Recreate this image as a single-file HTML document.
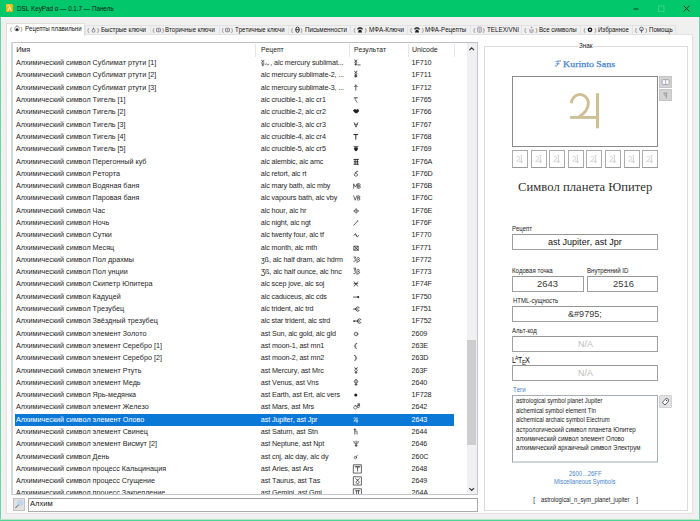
<!DOCTYPE html>
<html lang="ru"><head><meta charset="utf-8"><title>DSL KeyPad</title>
<style>
*{box-sizing:border-box;margin:0;padding:0}
html,body{width:700px;height:521px;overflow:hidden;background:#f0f0f0}
body{position:relative;font-family:"Liberation Sans",sans-serif;color:#000;font-kerning:none}
.abs{position:absolute}
.t{position:absolute;white-space:pre;transform-origin:0 0;display:block}
#win{position:absolute;left:0;top:0;width:700px;height:521px;background:#f0f0f0;border-left:1px solid #62d8a0;border-right:1px solid #62d8a0;border-bottom:1px solid #4fd495}
#winb{position:absolute;left:0;top:519px;width:700px;height:1px;background:#b4e6cd;z-index:2}
#inner{position:absolute;left:1px;top:17px;width:698px;height:502.400px;border:1.200px solid #f9eff7;border-bottom-width:0;background:#f0f0f0}
#title{position:absolute;left:0;top:0;width:700px;height:17px;background:#03c86b}
#ticon{position:absolute;left:6px;top:4.200px;width:7px;height:8.200px;border-radius:1.300px;background:linear-gradient(160deg,#f3c524,#e2a800);overflow:hidden}
.tab{position:absolute;top:25px;height:10px;background:#f0f0f0;border:1px solid #e2e2e2;border-bottom:none}
.tab.sel{top:23px;height:12.500px;background:#fff;border-color:#dedede;z-index:3}
#pane{position:absolute;left:6px;top:34px;width:687px;height:480px;background:#fff;border:1px solid #e2e2e2}
#lb{position:absolute;left:11px;top:42px;width:467px;height:453px;overflow:hidden;background:#fff}
.lbl{position:absolute;z-index:6}
#lbin{position:absolute;left:-11px;top:-42px;width:700px;height:521px}
.hsep{position:absolute;top:43.500px;height:13.500px;width:1px;background:#e5e5e5}
svg.sy{display:block;fill:none;stroke:currentColor;stroke-width:.9;stroke-linecap:round;stroke-linejoin:round;overflow:visible}
#sbtrack{position:absolute;left:467px;top:43px;width:10px;height:451px;background:#f0f0f0}
#sbthumb{position:absolute;left:467px;top:340px;width:8.500px;height:105px;background:#cdcdcd}
.field{position:absolute;background:#fff;border:1px solid #a0a0a0;border-top-color:#969696;border-radius:.800px}
.sbox{position:absolute;top:150px;width:16px;height:18px;background:#fff;border:1px solid #ababab;border-bottom-color:#9a9a9a;display:flex;align-items:center;justify-content:center}
.gbtn{position:absolute;background:#d3d3d3;border:1px solid #c6c6c6}
</style></head><body>
<div id="win"></div><div id="winb"></div>
<div id="inner"></div>
<div id="title">
  <div id="ticon"><svg viewBox="0 0 7 8.200" width="7" height="8.200" style="display:block"><path d="M2.100 1.500c.800-.200 1.200.200 1.500 1l1.700 4.400M3.500 3.700l-1.800 3.200" fill="none" stroke="#fff7dc" stroke-width=".95" stroke-linecap="round"/></svg></div>
  <span class="t" style="left:16.70px;top:5.00px;font-size:7.5px;line-height:7.5px;color:#0a2114;transform:scaleX(0.8378);">DSL KeyPad α — 0.1.7 — Панель</span>
  <svg class="abs" style="left:630px;top:0" width="70" height="17" viewBox="0 0 70 17"><path d="M3.500 9h5" stroke="#0a3a20" stroke-width="1"/><rect x="28.500" y="6" width="5.500" height="5.500" fill="none" stroke="#3ad285" stroke-width="1"/><path d="M53.700 5.700l5.800 5.800M59.500 5.700l-5.800 5.800" stroke="#0a3a20" stroke-width="1"/></svg>
</div>
<div class="tab sel" style="left:6.4px;width:79.0px"></div>
<span class="t" style="left:10.00px;top:27.00px;font-size:5.8px;line-height:5.8px;color:#505058;z-index:5;">(</span>
<span class="t" style="left:20.55px;top:27.00px;font-size:5.8px;line-height:5.8px;color:#505058;z-index:5;">)</span>
<span class="abs" style="left:13.8px;top:25.2px;width:6px;height:7px;z-index:5;display:flex;align-items:center;justify-content:center"><svg viewBox="0 0 6 7" width="6" height="7"><circle cx="3" cy="3.600" r="2.350" fill="#fff" stroke="#7d7d86" stroke-width=".8"/><path d="M1.300 5.100l1.700-2.400l1.700 2.400c-1 .900-2.400.900-3.400 0z" fill="#15151c"/><path d="M3 .300v1" stroke="#7d7d86" stroke-width=".8"/></svg></span>
<span class="t" style="left:24.75px;top:26.00px;font-size:6.6px;line-height:6.6px;color:#111;transform:scaleX(0.9187);z-index:5;">Рецепты плавильни</span>
<div class="tab" style="left:85.4px;width:65.2px"></div>
<span class="t" style="left:87.20px;top:28.00px;font-size:5.8px;line-height:5.8px;color:#505058;z-index:5;">(</span>
<span class="t" style="left:97.05px;top:28.00px;font-size:5.8px;line-height:5.8px;color:#505058;z-index:5;">)</span>
<span class="abs" style="left:90.2px;top:26.2px;width:6px;height:7px;z-index:5;display:flex;align-items:center;justify-content:center"><svg viewBox="0 0 5 7" width="5" height="7"><circle cx="2.500" cy="4.700" r="1.500" fill="none" stroke="#70707a" stroke-width=".8"/><path d="M2.500 1.600v1.600M1.700 2.300h1.600" stroke="#70707a" stroke-width=".7"/></svg></span>
<span class="t" style="left:101.15px;top:27.00px;font-size:6.6px;line-height:6.6px;color:#111;transform:scaleX(0.9370);z-index:5;">Быстрые ключи</span>
<div class="tab" style="left:149.6px;width:70.0px"></div>
<span class="t" style="left:152.50px;top:28.00px;font-size:5.8px;line-height:5.8px;color:#505058;z-index:5;">(</span>
<span class="t" style="left:162.05px;top:28.00px;font-size:5.8px;line-height:5.8px;color:#505058;z-index:5;">)</span>
<span class="abs" style="left:155.6px;top:26.2px;width:6px;height:7px;z-index:5;display:flex;align-items:center;justify-content:center"><svg viewBox="0 0 5 7" width="5" height="7"><rect x=".500" y="2.300" width="4" height="3.400" rx=".600" fill="none" stroke="#70707a" stroke-width=".8"/><rect x="1.800" y="3.400" width="1.500" height="1.200" fill="#70707a"/></svg></span>
<span class="t" style="left:165.35px;top:27.00px;font-size:6.6px;line-height:6.6px;color:#111;transform:scaleX(0.9139);z-index:5;">Вторичные ключи</span>
<div class="tab" style="left:218.6px;width:70.3px"></div>
<span class="t" style="left:221.80px;top:28.00px;font-size:5.8px;line-height:5.8px;color:#505058;z-index:5;">(</span>
<span class="t" style="left:231.05px;top:28.00px;font-size:5.8px;line-height:5.8px;color:#505058;z-index:5;">)</span>
<span class="abs" style="left:224.8px;top:26.2px;width:6px;height:7px;z-index:5;display:flex;align-items:center;justify-content:center"><svg viewBox="0 0 5 7" width="5" height="7"><rect x=".500" y="2.300" width="4" height="3.400" rx=".600" fill="none" stroke="#70707a" stroke-width=".8"/><rect x="1.800" y="3.400" width="1.500" height="1.200" fill="#70707a"/></svg></span>
<span class="t" style="left:234.95px;top:27.00px;font-size:6.6px;line-height:6.6px;color:#111;transform:scaleX(0.9147);z-index:5;">Третичные ключи</span>
<div class="tab" style="left:287.9px;width:63.4px"></div>
<span class="t" style="left:291.00px;top:28.00px;font-size:5.8px;line-height:5.8px;color:#505058;z-index:5;">(</span>
<span class="t" style="left:300.55px;top:28.00px;font-size:5.8px;line-height:5.8px;color:#505058;z-index:5;">)</span>
<span class="abs" style="left:294.1px;top:26.2px;width:6px;height:7px;z-index:5;display:flex;align-items:center;justify-content:center"><svg viewBox="0 0 5 7" width="5" height="7"><ellipse cx="2.500" cy="3.700" rx="1.750" ry="2.700" fill="none" stroke="#25252c" stroke-width=".95"/><path d="M.800 3.700h3.400" stroke="#25252c" stroke-width=".9"/></svg></span>
<span class="t" style="left:305.15px;top:27.00px;font-size:6.6px;line-height:6.6px;color:#111;transform:scaleX(0.9471);z-index:5;">Письменности</span>
<div class="tab" style="left:350.3px;width:57.8px"></div>
<span class="t" style="left:353.50px;top:28.00px;font-size:5.8px;line-height:5.8px;color:#505058;z-index:5;">(</span>
<span class="t" style="left:364.85px;top:28.00px;font-size:5.8px;line-height:5.8px;color:#505058;z-index:5;">)</span>
<span class="abs" style="left:357.0px;top:26.2px;width:6px;height:7px;z-index:5;display:flex;align-items:center;justify-content:center"><svg viewBox="0 0 6 7" width="6" height="7"><path d="M.300 2.800c0-2.100 5.400-2.100 5.400 0v.600h-1.400v-.700h-2.600v.700h-1.400zM.900 6.500l1-2.700h2.200l1 2.700z" fill="#1c1c22"/></svg></span>
<span class="t" style="left:368.75px;top:27.00px;font-size:6.6px;line-height:6.6px;color:#111;transform:scaleX(0.9516);z-index:5;">МФА-Ключи</span>
<div class="tab" style="left:407.1px;width:63.9px"></div>
<span class="t" style="left:410.00px;top:28.00px;font-size:5.8px;line-height:5.8px;color:#505058;z-index:5;">(</span>
<span class="t" style="left:421.75px;top:28.00px;font-size:5.8px;line-height:5.8px;color:#505058;z-index:5;">)</span>
<span class="abs" style="left:413.9px;top:26.2px;width:6px;height:7px;z-index:5;display:flex;align-items:center;justify-content:center"><svg viewBox="0 0 6 7" width="6" height="7"><path d="M.300 2.800c0-2.100 5.400-2.100 5.400 0v.600h-1.400v-.700h-2.600v.700h-1.400zM.900 6.500l1-2.700h2.200l1 2.700z" fill="#1c1c22"/></svg></span>
<span class="t" style="left:425.45px;top:27.00px;font-size:6.6px;line-height:6.6px;color:#111;transform:scaleX(0.9368);z-index:5;">МФА-Рецепты</span>
<div class="tab" style="left:470.0px;width:52.1px"></div>
<span class="t" style="left:473.20px;top:28.00px;font-size:5.8px;line-height:5.8px;color:#505058;z-index:5;">(</span>
<span class="t" style="left:482.75px;top:28.00px;font-size:5.8px;line-height:5.8px;color:#505058;z-index:5;">)</span>
<span class="abs" style="left:476.1px;top:26.2px;width:6px;height:7px;z-index:5;display:flex;align-items:center;justify-content:center"><svg viewBox="0 0 5 7" width="5" height="7"><rect x=".700" y="1.200" width="3.600" height="5" rx=".600" fill="none" stroke="#80808a" stroke-width=".75"/><path d="M1.600 2.800h1.800M1.600 4h1.800M2 5.200h1" stroke="#80808a" stroke-width=".6"/></svg></span>
<span class="t" style="left:486.65px;top:27.00px;font-size:6.6px;line-height:6.6px;color:#111;transform:scaleX(0.9483);z-index:5;">TELEX/VNI</span>
<div class="tab" style="left:521.1px;width:60.2px"></div>
<span class="t" style="left:524.30px;top:28.00px;font-size:5.8px;line-height:5.8px;color:#505058;z-index:5;">(</span>
<span class="t" style="left:535.55px;top:28.00px;font-size:5.8px;line-height:5.8px;color:#505058;z-index:5;">)</span>
<span class="abs" style="left:528.6px;top:26.2px;width:6px;height:7px;z-index:5;display:flex;align-items:center;justify-content:center"><svg viewBox="0 0 5 7" width="5" height="7"><path d="M2.500 .800v1.600M1.800 1.500h1.400M.900 6.200h3.200M1.200 6.200l-.500-2.800l1.800 1.300l1.800-1.300l-.500 2.800" fill="none" stroke="#85858f" stroke-width=".7"/></svg></span>
<span class="t" style="left:539.45px;top:27.00px;font-size:6.6px;line-height:6.6px;color:#111;transform:scaleX(0.9308);z-index:5;">Все символы</span>
<div class="tab" style="left:580.3px;width:52.8px"></div>
<span class="t" style="left:583.50px;top:28.00px;font-size:5.8px;line-height:5.8px;color:#505058;z-index:5;">(</span>
<span class="t" style="left:594.45px;top:28.00px;font-size:5.8px;line-height:5.8px;color:#505058;z-index:5;">)</span>
<span class="abs" style="left:587.2px;top:26.2px;width:6px;height:7px;z-index:5;display:flex;align-items:center;justify-content:center"><svg viewBox="0 0 6 7" width="6" height="7"><circle cx="3" cy="3.800" r="2.350" fill="#17171c"/><circle cx="3" cy="3.800" r=".950" fill="#fff"/></svg></span>
<span class="t" style="left:598.05px;top:27.00px;font-size:6.6px;line-height:6.6px;color:#111;transform:scaleX(0.9188);z-index:5;">Избранное</span>
<div class="tab" style="left:632.1px;width:44.3px"></div>
<span class="t" style="left:634.90px;top:28.00px;font-size:5.8px;line-height:5.8px;color:#505058;z-index:5;">(</span>
<span class="t" style="left:645.15px;top:28.00px;font-size:5.8px;line-height:5.8px;color:#505058;z-index:5;">)</span>
<span class="abs" style="left:638.5px;top:26.2px;width:6px;height:7px;z-index:5;display:flex;align-items:center;justify-content:center"><svg viewBox="0 0 5 7" width="5" height="7"><circle cx="2.500" cy="3" r="1.850" fill="none" stroke="#4c4c55" stroke-width=".8"/><path d="M1.800 5.500h1.400M2 6.400h1M2.500 3.200v1.800" stroke="#4c4c55" stroke-width=".7"/></svg></span>
<span class="t" style="left:649.05px;top:27.00px;font-size:6.6px;line-height:6.6px;color:#111;transform:scaleX(0.9337);z-index:5;">Помощь</span>
<div id="pane"></div>
<div id="lb"><div id="lbin">
  <span class="t" style="left:16.20px;top:46.00px;font-size:7.2px;line-height:7.2px;color:#222;">Имя</span>
  <span class="t" style="left:260.80px;top:46.00px;font-size:7.2px;line-height:7.2px;color:#222;transform:scaleX(0.9407);">Рецепт</span>
  <span class="t" style="left:353.60px;top:46.00px;font-size:7.2px;line-height:7.2px;color:#222;transform:scaleX(0.9370);">Результат</span>
  <span class="t" style="left:411.50px;top:46.00px;font-size:7.2px;line-height:7.2px;color:#222;transform:scaleX(0.9767);">Unicode</span>
  <div class="hsep" style="left:255.400px"></div><div class="hsep" style="left:349px"></div><div class="hsep" style="left:407.800px"></div><div class="hsep" style="left:454.200px"></div>
<span class="t" style="left:16.00px;top:59.00px;font-size:7.2px;line-height:7.2px;color:#1e1e1e;">Алхимический символ Сублимат ртути [1]</span>
<svg class="abs" style="left:261px;top:58.5px" viewBox="0 0 10 8" width="10" height="8"><g fill="none" stroke="#333" stroke-width=".7" stroke-linecap="round"><path d="M.600 1.200c0 1.600 2.400 1.600 2.400 0M1.800 2.600a1.200 1.200 0 1 0 .010 0M1.800 5v1.800M1 6h1.600"/><path d="M4.200 5.600c.400-1.300 1.400-1.300 1.800-.300s1.300 1.200 1.900-.200" stroke-width=".65"/></g></svg>
<span class="t" style="left:270.30px;top:59.00px;font-size:7.2px;line-height:7.2px;color:#1e1e1e;letter-spacing:-0.11px;">, alc mercury sublimat...</span>
<span class="abs" style="left:353.400px;top:58.4px;color:#1e1e1e"><svg class="sy" viewBox="0 0 10 10" width="8.0" height="8"><path d="M2 2.5c0 2 3 2 3 0M3.5 4a1.3 1.3 0 1 0 .01 0M3.5 6.6v2.4M2.3 8h2.4M6 8.6h3"/></svg></span>
<span class="t" style="left:411.60px;top:59.00px;font-size:7.2px;line-height:7.2px;color:#1e1e1e;letter-spacing:-0.1px;">1F710</span>
<span class="t" style="left:16.00px;top:71.00px;font-size:7.2px;line-height:7.2px;color:#1e1e1e;">Алхимический символ Сублимат ртути [2]</span>
<span class="t" style="left:260.80px;top:71.00px;font-size:7.2px;line-height:7.2px;color:#1e1e1e;letter-spacing:-0.11px;">alc mercury sublimate-2, ...</span>
<span class="abs" style="left:353.400px;top:70.4px;color:#1e1e1e"><svg class="sy" viewBox="0 0 10 10" width="8.0" height="8"><path d="M2 1.5c0 2 3 2 3 0M3.5 3.2a1.3 1.3 0 1 0 .01 0M3.5 5.8v3.2M2.3 7h2.4M2.3 8.2h2.4"/></svg></span>
<span class="t" style="left:411.60px;top:71.00px;font-size:7.2px;line-height:7.2px;color:#1e1e1e;letter-spacing:-0.1px;">1F711</span>
<span class="t" style="left:16.00px;top:84.00px;font-size:7.2px;line-height:7.2px;color:#1e1e1e;">Алхимический символ Сублимат ртути [3]</span>
<span class="t" style="left:260.80px;top:84.00px;font-size:7.2px;line-height:7.2px;color:#1e1e1e;letter-spacing:-0.11px;">alc mercury sublimate-3, ...</span>
<span class="abs" style="left:353.400px;top:83.4px;color:#1e1e1e"><svg class="sy" viewBox="0 0 10 10" width="8.0" height="8"><path d="M1.5 4.5c1-1.5 3-1.5 4 0M3.5 3.4v5.6M3.5 2.2v.4"/></svg></span>
<span class="t" style="left:411.60px;top:84.00px;font-size:7.2px;line-height:7.2px;color:#1e1e1e;letter-spacing:-0.1px;">1F712</span>
<span class="t" style="left:16.00px;top:96.00px;font-size:7.2px;line-height:7.2px;color:#1e1e1e;">Алхимический символ Тигель [1]</span>
<span class="t" style="left:260.80px;top:96.00px;font-size:7.2px;line-height:7.2px;color:#1e1e1e;letter-spacing:-0.11px;">alc crucible-1, alc cr1</span>
<span class="abs" style="left:353.400px;top:95.4px;color:#1e1e1e"><svg class="sy" viewBox="0 0 10 10" width="8.0" height="8"><path d="M1.5 3.5h4M3.5 3.5c-2 2 0 3 1.5 5.5"/></svg></span>
<span class="t" style="left:411.60px;top:96.00px;font-size:7.2px;line-height:7.2px;color:#1e1e1e;letter-spacing:-0.1px;">1F765</span>
<span class="t" style="left:16.00px;top:108.00px;font-size:7.2px;line-height:7.2px;color:#1e1e1e;">Алхимический символ Тигель [2]</span>
<span class="t" style="left:260.80px;top:108.00px;font-size:7.2px;line-height:7.2px;color:#1e1e1e;letter-spacing:-0.11px;">alc crucible-2, alc cr2</span>
<span class="abs" style="left:353.400px;top:107.4px;color:#1e1e1e"><svg class="sy" viewBox="0 0 10 10" width="8.0" height="8"><path d="M1 4.5c0 4 6 4 6 0c0-2-2.5-2-3 0c-.5-2-3-2-3 0z" fill="currentColor"/></svg></span>
<span class="t" style="left:411.60px;top:108.00px;font-size:7.2px;line-height:7.2px;color:#1e1e1e;letter-spacing:-0.1px;">1F766</span>
<span class="t" style="left:16.00px;top:121.00px;font-size:7.2px;line-height:7.2px;color:#1e1e1e;">Алхимический символ Тигель [3]</span>
<span class="t" style="left:260.80px;top:121.00px;font-size:7.2px;line-height:7.2px;color:#1e1e1e;letter-spacing:-0.11px;">alc crucible-3, alc cr3</span>
<span class="abs" style="left:353.400px;top:120.4px;color:#1e1e1e"><svg class="sy" viewBox="0 0 10 10" width="8.0" height="8"><path d="M1.5 3.5l2.3 5.5l2.3-5.5M2.3 5.3h3"/></svg></span>
<span class="t" style="left:411.60px;top:121.00px;font-size:7.2px;line-height:7.2px;color:#1e1e1e;letter-spacing:-0.1px;">1F767</span>
<span class="t" style="left:16.00px;top:133.00px;font-size:7.2px;line-height:7.2px;color:#1e1e1e;">Алхимический символ Тигель [4]</span>
<span class="t" style="left:260.80px;top:133.00px;font-size:7.2px;line-height:7.2px;color:#1e1e1e;letter-spacing:-0.11px;">alc crucible-4, alc cr4</span>
<span class="abs" style="left:353.400px;top:132.4px;color:#1e1e1e"><svg class="sy" viewBox="0 0 10 10" width="8.0" height="8"><path d="M1 3.2h5M3.5 3.2v5.8" stroke-width="1.2"/></svg></span>
<span class="t" style="left:411.60px;top:133.00px;font-size:7.2px;line-height:7.2px;color:#1e1e1e;letter-spacing:-0.1px;">1F768</span>
<span class="t" style="left:16.00px;top:145.00px;font-size:7.2px;line-height:7.2px;color:#1e1e1e;">Алхимический символ Тигель [5]</span>
<span class="t" style="left:260.80px;top:145.00px;font-size:7.2px;line-height:7.2px;color:#1e1e1e;letter-spacing:-0.11px;">alc crucible-5, alc cr5</span>
<span class="abs" style="left:353.400px;top:144.4px;color:#1e1e1e"><svg class="sy" viewBox="0 0 10 10" width="8.0" height="8"><path d="M1.2 3h5M3.7 3v2M1.7 5c0 5 4 5 4 0z" fill="currentColor" stroke-width=".8"/></svg></span>
<span class="t" style="left:411.60px;top:145.00px;font-size:7.2px;line-height:7.2px;color:#1e1e1e;letter-spacing:-0.1px;">1F769</span>
<span class="t" style="left:16.00px;top:158.00px;font-size:7.2px;line-height:7.2px;color:#1e1e1e;">Алхимический символ Перегонный куб</span>
<span class="t" style="left:260.80px;top:158.00px;font-size:7.2px;line-height:7.2px;color:#1e1e1e;letter-spacing:-0.11px;">alc alembic, alc amc</span>
<span class="abs" style="left:353.400px;top:157.4px;color:#1e1e1e"><svg class="sy" viewBox="0 0 10 10" width="8.0" height="8"><path d="M1.2 3h5.6M1.2 9h5.6M2.6 3v6M5.4 3v6M1.5 6h5" stroke-width="1.1"/></svg></span>
<span class="t" style="left:411.60px;top:158.00px;font-size:7.2px;line-height:7.2px;color:#1e1e1e;letter-spacing:-0.1px;">1F76A</span>
<span class="t" style="left:16.00px;top:170.00px;font-size:7.2px;line-height:7.2px;color:#1e1e1e;">Алхимический символ Реторта</span>
<span class="t" style="left:260.80px;top:170.00px;font-size:7.2px;line-height:7.2px;color:#1e1e1e;letter-spacing:-0.11px;">alc retort, alc rt</span>
<span class="abs" style="left:353.400px;top:169.4px;color:#1e1e1e"><svg class="sy" viewBox="0 0 10 10" width="8.0" height="8"><path d="M3.6 5a2 2 0 1 0 .01 0M3 5c0-2 2-2.5 3-2"/></svg></span>
<span class="t" style="left:411.60px;top:170.00px;font-size:7.2px;line-height:7.2px;color:#1e1e1e;letter-spacing:-0.1px;">1F76D</span>
<span class="t" style="left:16.00px;top:182.00px;font-size:7.2px;line-height:7.2px;color:#1e1e1e;">Алхимический символ Водяная баня</span>
<span class="t" style="left:260.80px;top:182.00px;font-size:7.2px;line-height:7.2px;color:#1e1e1e;letter-spacing:-0.11px;">alc mary bath, alc mby</span>
<span class="abs" style="left:353.400px;top:181.4px;color:#1e1e1e"><svg class="sy" viewBox="0 0 11 10" width="8.8" height="8"><path d="M.8 9v-5.5l2.2 4l2.2-4v5.5M6.3 3.5v5.5h1.7c1.6 0 1.6-2.7 0-2.7h-1.7M8 6.3c1.3 0 1.3-2.8 0-2.8h-1.7" stroke-width=".8"/></svg></span>
<span class="t" style="left:411.60px;top:182.00px;font-size:7.2px;line-height:7.2px;color:#1e1e1e;letter-spacing:-0.1px;">1F76B</span>
<span class="t" style="left:16.00px;top:194.00px;font-size:7.2px;line-height:7.2px;color:#1e1e1e;">Алхимический символ Паровая баня</span>
<span class="t" style="left:260.80px;top:194.00px;font-size:7.2px;line-height:7.2px;color:#1e1e1e;letter-spacing:-0.11px;">alc vapours bath, alc vby</span>
<span class="abs" style="left:353.400px;top:193.4px;color:#1e1e1e"><svg class="sy" viewBox="0 0 11 10" width="8.8" height="8"><path d="M.8 3.5l2 5.5l2-5.5M6 9v-5.5h1.5c1.5 0 1.5 2.7 0 2.7h-1.5M7.5 6.2c1.7 0 1.7 2.8 0 2.8" stroke-width=".8"/></svg></span>
<span class="t" style="left:411.60px;top:194.00px;font-size:7.2px;line-height:7.2px;color:#1e1e1e;letter-spacing:-0.1px;">1F76C</span>
<span class="t" style="left:16.00px;top:207.00px;font-size:7.2px;line-height:7.2px;color:#1e1e1e;">Алхимический символ Час</span>
<span class="t" style="left:260.80px;top:207.00px;font-size:7.2px;line-height:7.2px;color:#1e1e1e;letter-spacing:-0.11px;">alc hour, alc hr</span>
<span class="abs" style="left:353.400px;top:206.4px;color:#1e1e1e"><svg class="sy" viewBox="0 0 10 10" width="8.0" height="8"><path d="M4 3.800a2.400 2.400 0 1 0 .010 0M.800 6.200h6.400M4 3.800v4.800" stroke-width=".6"/></svg></span>
<span class="t" style="left:411.60px;top:207.00px;font-size:7.2px;line-height:7.2px;color:#1e1e1e;letter-spacing:-0.1px;">1F76E</span>
<span class="t" style="left:16.00px;top:219.00px;font-size:7.2px;line-height:7.2px;color:#1e1e1e;">Алхимический символ Ночь</span>
<span class="t" style="left:260.80px;top:219.00px;font-size:7.2px;line-height:7.2px;color:#1e1e1e;letter-spacing:-0.11px;">alc night, alc ngt</span>
<span class="abs" style="left:353.400px;top:218.4px;color:#1e1e1e"><svg class="sy" viewBox="0 0 10 10" width="8.0" height="8"><path d="M1 9l4.5-5M5.5 3.2l.8.8"/></svg></span>
<span class="t" style="left:411.60px;top:219.00px;font-size:7.2px;line-height:7.2px;color:#1e1e1e;letter-spacing:-0.1px;">1F76F</span>
<span class="t" style="left:16.00px;top:231.00px;font-size:7.2px;line-height:7.2px;color:#1e1e1e;">Алхимический символ Сутки</span>
<span class="t" style="left:260.80px;top:231.00px;font-size:7.2px;line-height:7.2px;color:#1e1e1e;letter-spacing:-0.11px;">alc twenty four, alc tf</span>
<span class="abs" style="left:353.400px;top:230.4px;color:#1e1e1e"><svg class="sy" viewBox="0 0 10 10" width="8.0" height="8"><path d="M1 6.800c1-2.200 2-2.200 3 0s2 2.200 3 0M3.200 4.600l1.600 3.600" stroke-width=".8"/></svg></span>
<span class="t" style="left:411.60px;top:231.00px;font-size:7.2px;line-height:7.2px;color:#1e1e1e;letter-spacing:-0.1px;">1F770</span>
<span class="t" style="left:16.00px;top:244.00px;font-size:7.2px;line-height:7.2px;color:#1e1e1e;">Алхимический символ Месяц</span>
<span class="t" style="left:260.80px;top:244.00px;font-size:7.2px;line-height:7.2px;color:#1e1e1e;letter-spacing:-0.11px;">alc month, alc mth</span>
<span class="abs" style="left:353.400px;top:243.4px;color:#1e1e1e"><svg class="sy" viewBox="0 0 10 10" width="8.0" height="8"><path d="M1.5 4h5v5h-5zM1.5 4l5 5M6.5 4l-5 5" stroke-width=".9"/></svg></span>
<span class="t" style="left:411.60px;top:244.00px;font-size:7.2px;line-height:7.2px;color:#1e1e1e;letter-spacing:-0.1px;">1F771</span>
<span class="t" style="left:16.00px;top:256.00px;font-size:7.2px;line-height:7.2px;color:#1e1e1e;">Алхимический символ Пол драхмы</span>
<span class="t" style="left:260.80px;top:256.00px;font-size:7.2px;line-height:7.2px;color:#1e1e1e;letter-spacing:-0.11px;">ʒß, alc half dram, alc hdrm</span>
<span class="abs" style="left:353.400px;top:255.4px;color:#1e1e1e"><svg class="sy" viewBox="0 0 11 10" width="8.8" height="8"><path d="M1 2.5h2.6l-1.8 2.2c2.5-.4 2.5 3.6-.8 3.2M5 9.5v-5c0-2 3-2 3 0c0 1-1 1.3-1.5 1.3c2.500 0 2.5 3-.5 2.600" stroke-width=".8"/></svg></span>
<span class="t" style="left:411.60px;top:256.00px;font-size:7.2px;line-height:7.2px;color:#1e1e1e;letter-spacing:-0.1px;">1F772</span>
<span class="t" style="left:16.00px;top:268.00px;font-size:7.2px;line-height:7.2px;color:#1e1e1e;">Алхимический символ Пол унции</span>
<span class="t" style="left:260.80px;top:268.00px;font-size:7.2px;line-height:7.2px;color:#1e1e1e;letter-spacing:-0.11px;">Ʒß, alc half ounce, alc hnc</span>
<span class="abs" style="left:353.400px;top:267.4px;color:#1e1e1e"><svg class="sy" viewBox="0 0 11 10" width="8.8" height="8"><path d="M1 1.5h2.600l-1.700 1.600h1.7l-1.800 2c2.500-.4 2.500 3.600-.8 3.200M5 9.500v-5c0-2 3-2 3 0c0 1-1 1.300-1.500 1.300c2.500 0 2.500 3-.5 2.600" stroke-width=".8"/></svg></span>
<span class="t" style="left:411.60px;top:268.00px;font-size:7.2px;line-height:7.2px;color:#1e1e1e;letter-spacing:-0.1px;">1F773</span>
<span class="t" style="left:16.00px;top:280.00px;font-size:7.2px;line-height:7.2px;color:#1e1e1e;">Алхимический символ Скипетр Юпитера</span>
<span class="t" style="left:260.80px;top:280.00px;font-size:7.2px;line-height:7.2px;color:#1e1e1e;letter-spacing:-0.11px;">alc scep jove, alc soj</span>
<span class="abs" style="left:353.400px;top:279.4px;color:#1e1e1e"><svg class="sy" viewBox="0 0 10 10" width="8.0" height="8"><path d="M1.300 3.500l4.600 5.500M5.900 3.500l-4.600 5.500M1.300 5.800h4.600" stroke-width=".9"/></svg></span>
<span class="t" style="left:411.60px;top:280.00px;font-size:7.2px;line-height:7.2px;color:#1e1e1e;letter-spacing:-0.1px;">1F74F</span>
<span class="t" style="left:16.00px;top:293.00px;font-size:7.2px;line-height:7.2px;color:#1e1e1e;">Алхимический символ Кадуцей</span>
<span class="t" style="left:260.80px;top:293.00px;font-size:7.2px;line-height:7.2px;color:#1e1e1e;letter-spacing:-0.11px;">alc caduceus, alc cds</span>
<span class="abs" style="left:353.400px;top:292.4px;color:#1e1e1e"><svg class="sy" viewBox="0 0 10 10" width="8.0" height="8"><path d="M.5 6.300h5" /><circle cx="6.500" cy="6.300" r="1.300" fill="currentColor" stroke="none"/></svg></span>
<span class="t" style="left:411.60px;top:293.00px;font-size:7.2px;line-height:7.2px;color:#1e1e1e;letter-spacing:-0.1px;">1F750</span>
<span class="t" style="left:16.00px;top:305.00px;font-size:7.2px;line-height:7.2px;color:#1e1e1e;">Алхимический символ Трезубец</span>
<span class="t" style="left:260.80px;top:305.00px;font-size:7.2px;line-height:7.2px;color:#1e1e1e;letter-spacing:-0.11px;">alc trident, alc trd</span>
<span class="abs" style="left:353.400px;top:304.4px;color:#1e1e1e"><svg class="sy" viewBox="0 0 10 10" width="8.0" height="8"><path d="M.500 6.300h6M7.800 4.300A2.700 2.700 0 1 0 7.800 8.300" stroke-width="1"/></svg></span>
<span class="t" style="left:411.60px;top:305.00px;font-size:7.2px;line-height:7.2px;color:#1e1e1e;letter-spacing:-0.1px;">1F751</span>
<span class="t" style="left:16.00px;top:317.00px;font-size:7.2px;line-height:7.2px;color:#1e1e1e;">Алхимический символ Звёздный трезубец</span>
<span class="t" style="left:260.80px;top:317.00px;font-size:7.2px;line-height:7.2px;color:#1e1e1e;letter-spacing:-0.11px;">alc star trident, alc strd</span>
<span class="abs" style="left:353.400px;top:316.4px;color:#1e1e1e"><svg class="sy" viewBox="0 0 12 10" width="9.6" height="8"><circle cx="1.300" cy="6.300" r="1.100" fill="currentColor" stroke="none"/><path d="M2 6.300h6.500M10 4.300A2.700 2.700 0 1 0 10 8.300" stroke-width="1"/></svg></span>
<span class="t" style="left:411.60px;top:317.00px;font-size:7.2px;line-height:7.2px;color:#1e1e1e;letter-spacing:-0.1px;">1F752</span>
<span class="t" style="left:16.00px;top:330.00px;font-size:7.2px;line-height:7.2px;color:#1e1e1e;">Алхимический символ элемент Золото</span>
<span class="t" style="left:260.80px;top:330.00px;font-size:7.2px;line-height:7.2px;color:#1e1e1e;letter-spacing:-0.11px;">ast Sun, alc gold, alc gld</span>
<span class="abs" style="left:353.400px;top:329.4px;color:#1e1e1e"><svg class="sy" viewBox="0 0 10 10" width="8.0" height="8"><circle cx="3.800" cy="6.200" r="2.300" fill="none" stroke-width=".8"/><circle cx="3.800" cy="6.200" r=".6" fill="currentColor" stroke="none"/></svg></span>
<span class="t" style="left:411.60px;top:330.00px;font-size:7.2px;line-height:7.2px;color:#1e1e1e;letter-spacing:-0.1px;">2609</span>
<span class="t" style="left:16.00px;top:342.00px;font-size:7.2px;line-height:7.2px;color:#1e1e1e;">Алхимический символ элемент Серебро [1]</span>
<span class="t" style="left:260.80px;top:342.00px;font-size:7.2px;line-height:7.2px;color:#1e1e1e;letter-spacing:-0.11px;">ast moon-1, ast mn1</span>
<span class="abs" style="left:353.400px;top:341.4px;color:#1e1e1e"><svg class="sy" viewBox="0 0 10 10" width="8.0" height="8"><path d="M4.500 3c-3.500 1-3.500 5.500 0 6.500c-2-1.500-2-5 0-6.500z" stroke-width=".7"/></svg></span>
<span class="t" style="left:411.60px;top:342.00px;font-size:7.2px;line-height:7.2px;color:#1e1e1e;letter-spacing:-0.1px;">263E</span>
<span class="t" style="left:16.00px;top:354.00px;font-size:7.2px;line-height:7.2px;color:#1e1e1e;">Алхимический символ элемент Серебро [2]</span>
<span class="t" style="left:260.80px;top:354.00px;font-size:7.2px;line-height:7.2px;color:#1e1e1e;letter-spacing:-0.11px;">ast moon-2, ast mn2</span>
<span class="abs" style="left:353.400px;top:353.4px;color:#1e1e1e"><svg class="sy" viewBox="0 0 10 10" width="8.0" height="8"><path d="M2 3c3.500 1 3.500 5.500 0 6.500c2-1.500 2-5 0-6.500z" stroke-width=".7"/></svg></span>
<span class="t" style="left:411.60px;top:354.00px;font-size:7.2px;line-height:7.2px;color:#1e1e1e;letter-spacing:-0.1px;">263D</span>
<span class="t" style="left:16.00px;top:367.00px;font-size:7.2px;line-height:7.2px;color:#1e1e1e;">Алхимический символ элемент Ртуть</span>
<span class="t" style="left:260.80px;top:367.00px;font-size:7.2px;line-height:7.2px;color:#1e1e1e;letter-spacing:-0.11px;">ast Mercury, ast Mrc</span>
<span class="abs" style="left:353.400px;top:366.4px;color:#1e1e1e"><svg class="sy" viewBox="0 0 10 10" width="8.0" height="8"><path d="M2 2c0 2 3.500 2 3.500 0M3.800 3.600a1.700 1.700 0 1 0 .01 0M3.800 7v2.500M2.500 8.300h2.600" stroke-width=".8"/></svg></span>
<span class="t" style="left:411.60px;top:367.00px;font-size:7.2px;line-height:7.2px;color:#1e1e1e;letter-spacing:-0.1px;">263F</span>
<span class="t" style="left:16.00px;top:379.00px;font-size:7.2px;line-height:7.2px;color:#1e1e1e;">Алхимический символ элемент Медь</span>
<span class="t" style="left:260.80px;top:379.00px;font-size:7.2px;line-height:7.2px;color:#1e1e1e;letter-spacing:-0.11px;">ast Venus, ast Vns</span>
<span class="abs" style="left:353.400px;top:378.4px;color:#1e1e1e"><svg class="sy" viewBox="0 0 10 10" width="8.0" height="8"><path d="M3.800 2a2.200 2.200 0 1 0 .01 0M3.800 6.400v3M2.500 8h2.600M3.800 3.500v1.500" stroke-width=".9"/></svg></span>
<span class="t" style="left:411.60px;top:379.00px;font-size:7.2px;line-height:7.2px;color:#1e1e1e;letter-spacing:-0.1px;">2640</span>
<span class="t" style="left:16.00px;top:391.00px;font-size:7.2px;line-height:7.2px;color:#1e1e1e;">Алхимический символ Ярь-медянка</span>
<span class="t" style="left:260.80px;top:391.00px;font-size:7.2px;line-height:7.2px;color:#1e1e1e;letter-spacing:-0.11px;">ast Earth, ast Ert, alc vers</span>
<span class="abs" style="left:353.400px;top:390.4px;color:#1e1e1e"><svg class="sy" viewBox="0 0 10 10" width="8.0" height="8"><circle cx="3.500" cy="6.300" r="1.900" fill="currentColor" stroke="none"/></svg></span>
<span class="t" style="left:411.60px;top:391.00px;font-size:7.2px;line-height:7.2px;color:#1e1e1e;letter-spacing:-0.1px;">1F728</span>
<span class="t" style="left:16.00px;top:403.00px;font-size:7.2px;line-height:7.2px;color:#1e1e1e;">Алхимический символ элемент Железо</span>
<span class="t" style="left:260.80px;top:403.00px;font-size:7.2px;line-height:7.2px;color:#1e1e1e;letter-spacing:-0.11px;">ast Mars, ast Mrs</span>
<span class="abs" style="left:353.400px;top:402.4px;color:#1e1e1e"><svg class="sy" viewBox="0 0 11 10" width="8.8" height="8"><path d="M3 4.500a2.200 2.200 0 1 0 .01 0M4.800 5l3-2.500M5.800 2.300h2.200v2.200M6.800 4a1.500 1.500 0 1 0 .01 0" stroke-width=".8"/></svg></span>
<span class="t" style="left:411.60px;top:403.00px;font-size:7.2px;line-height:7.2px;color:#1e1e1e;letter-spacing:-0.1px;">2642</span>
<div class="abs" style="left:15.1px;top:414.00px;width:439px;height:11.7px;background:#0a78d7"></div>
<span class="t" style="left:16.00px;top:416.00px;font-size:7.2px;line-height:7.2px;color:#fff;">Алхимический символ элемент Олово</span>
<span class="t" style="left:260.80px;top:416.00px;font-size:7.2px;line-height:7.2px;color:#fff;letter-spacing:-0.11px;">ast Jupiter, ast Jpr</span>
<span class="abs" style="left:353.400px;top:415.4px;color:#fff"><svg class="sy" viewBox="0 0 10 10" width="8.0" height="8"><path d="M1 4c1.500-1.500 3-.5 2.500 1.500l-2.500 2h5M5 3.500v6" stroke-width=".8"/></svg></span>
<span class="t" style="left:411.60px;top:416.00px;font-size:7.2px;line-height:7.2px;color:#fff;letter-spacing:-0.1px;">2643</span>
<span class="t" style="left:16.00px;top:428.00px;font-size:7.2px;line-height:7.2px;color:#1e1e1e;">Алхимический символ элемент Свинец</span>
<span class="t" style="left:260.80px;top:428.00px;font-size:7.2px;line-height:7.2px;color:#1e1e1e;letter-spacing:-0.11px;">ast Saturn, ast Stn</span>
<span class="abs" style="left:353.400px;top:427.4px;color:#1e1e1e"><svg class="sy" viewBox="0 0 10 10" width="8.0" height="8"><path d="M2.300 2v7M1.200 3.300h2.400M2.300 5.500c2-1.800 3.500 0 2.500 2c-.5 1 0 1.500.700 1.200" stroke-width=".8"/></svg></span>
<span class="t" style="left:411.60px;top:428.00px;font-size:7.2px;line-height:7.2px;color:#1e1e1e;letter-spacing:-0.1px;">2644</span>
<span class="t" style="left:16.00px;top:440.00px;font-size:7.2px;line-height:7.2px;color:#1e1e1e;">Алхимический символ элемент Висмут [2]</span>
<span class="t" style="left:260.80px;top:440.00px;font-size:7.2px;line-height:7.2px;color:#1e1e1e;letter-spacing:-0.11px;">ast Neptune, ast Npt</span>
<span class="abs" style="left:353.400px;top:439.4px;color:#1e1e1e"><svg class="sy" viewBox="0 0 10 10" width="8.0" height="8"><path d="M1.200 3c0 4.500 5.400 4.500 5.400 0M3.900 2.500v7M2.700 8.300h2.400" stroke-width=".9"/></svg></span>
<span class="t" style="left:411.60px;top:440.00px;font-size:7.2px;line-height:7.2px;color:#1e1e1e;letter-spacing:-0.1px;">2646</span>
<span class="t" style="left:16.00px;top:453.00px;font-size:7.2px;line-height:7.2px;color:#1e1e1e;">Алхимический символ День</span>
<span class="t" style="left:260.80px;top:453.00px;font-size:7.2px;line-height:7.2px;color:#1e1e1e;letter-spacing:-0.11px;">ast cnj, alc day, alc dy</span>
<span class="abs" style="left:353.400px;top:452.4px;color:#1e1e1e"><svg class="sy" viewBox="0 0 10 10" width="8.0" height="8"><circle cx="3" cy="7" r="1.500" fill="none" stroke-width=".7"/><path d="M4 6l1.500-2" stroke-width=".7"/></svg></span>
<span class="t" style="left:411.60px;top:453.00px;font-size:7.2px;line-height:7.2px;color:#1e1e1e;letter-spacing:-0.1px;">260C</span>
<span class="t" style="left:16.00px;top:465.00px;font-size:7.2px;line-height:7.2px;color:#1e1e1e;">Алхимический символ процесс Кальцинация</span>
<span class="t" style="left:260.80px;top:465.00px;font-size:7.2px;line-height:7.2px;color:#1e1e1e;letter-spacing:-0.11px;">ast Aries, ast Ars</span>
<span class="abs" style="left:353.400px;top:464.4px;color:#1e1e1e"><svg class="sy" viewBox="0 0 10 10" width="10.400" height="10.400" style="margin-top:-1.800px"><path d="M.700 1.700h7.400v8h-7.400zM2.600 4.300c.800-1.100 1.800-.500 1.800.700v2.800M6.200 4.300c-.800-1.100-1.800-.500-1.800.700M2 3.300h4.800" stroke-width=".65"/></svg></span>
<span class="t" style="left:411.60px;top:465.00px;font-size:7.2px;line-height:7.2px;color:#1e1e1e;letter-spacing:-0.1px;">2648</span>
<span class="t" style="left:16.00px;top:477.00px;font-size:7.2px;line-height:7.2px;color:#1e1e1e;">Алхимический символ процесс Сгущение</span>
<span class="t" style="left:260.80px;top:477.00px;font-size:7.2px;line-height:7.2px;color:#1e1e1e;letter-spacing:-0.11px;">ast Taurus, ast Tas</span>
<span class="abs" style="left:353.400px;top:476.4px;color:#1e1e1e"><svg class="sy" viewBox="0 0 10 10" width="10.400" height="10.400" style="margin-top:-1.800px"><path d="M.700 1.700h7.400v8h-7.400zM4.400 5.400a1.500 1.500 0 1 0 .010 0M2.600 3.600c.500 1.500 3.100 1.500 3.600 0" stroke-width=".65"/></svg></span>
<span class="t" style="left:411.60px;top:477.00px;font-size:7.2px;line-height:7.2px;color:#1e1e1e;letter-spacing:-0.1px;">2649</span>
<span class="t" style="left:16.00px;top:489.00px;font-size:7.2px;line-height:7.2px;color:#1e1e1e;">Алхимический символ процесс Закрепление</span>
<span class="t" style="left:260.80px;top:489.00px;font-size:7.2px;line-height:7.2px;color:#1e1e1e;letter-spacing:-0.11px;">ast Gemini, ast Gmi</span>
<span class="abs" style="left:353.400px;top:488.4px;color:#1e1e1e"><svg class="sy" viewBox="0 0 10 10" width="10.400" height="10.400" style="margin-top:-1.800px"><path d="M.700 1.700h7.400v8h-7.400zM2.400 3.600h4M2.400 8h4M3.500 3.600v4.400M5.300 3.600v4.400" stroke-width=".65"/></svg></span>
<span class="t" style="left:411.60px;top:489.00px;font-size:7.2px;line-height:7.2px;color:#1e1e1e;letter-spacing:-0.1px;">264A</span>
  <div id="sbtrack"></div><div id="sbthumb"></div>
  <div class="lbl" style="left:11px;top:42px;width:467px;height:1px;background:#bcc0c6"></div>
  <div class="lbl" style="left:11px;top:494px;width:467px;height:1px;background:#c3c7cd"></div>
  <div class="lbl" style="left:11px;top:42px;width:2px;height:453px;background:#d2d5da"></div>
  <div class="lbl" style="left:477px;top:42px;width:1px;height:453px;background:#c3c7cd"></div>
  <svg class="abs" style="left:467.300px;top:44px" width="9.700" height="10" viewBox="0 0 9.700 10"><path d="M2.400 6.200l2.300-2.300l2.300 2.300" fill="none" stroke="#333" stroke-width="1.200"/></svg>
  <svg class="abs" style="left:467.300px;top:483.500px" width="9.700" height="10" viewBox="0 0 9.700 10"><path d="M2.400 4.200l2.300 2.300l2.300-2.300" fill="none" stroke="#333" stroke-width="1.200"/></svg>
</div></div>
<!-- search -->
<div class="abs" style="left:12.900px;top:498.400px;width:12.300px;height:12.300px;background:#e1e1e1;border:1px solid #c2c2c2"><svg viewBox="0 0 12 12" width="10.300" height="10.300" style="display:block"><circle cx="7.300" cy="4.700" r="2.900" fill="#bddaf5" stroke="#a3c8ea" stroke-width=".6"/><path d="M5.100 7l-3.100 3.100" stroke="#707b87" stroke-width="1.200" stroke-linecap="round"/></svg></div>
<div class="field" style="left:28px;top:498px;width:450px;height:13.500px;border-color:#ababab;border-top-color:#9c9c9c"></div>
<span class="t" style="left:29.90px;top:500.00px;font-size:7.5px;line-height:7.5px;color:#111;transform:scaleX(1.0056);">Алхим</span>
<!-- right group -->
<div class="abs" style="left:483.500px;top:45.500px;width:204.500px;height:465px;border:1px solid #dcdcdc"></div>
<div class="abs" style="left:577.500px;top:42px;width:15.800px;height:8px;background:#fff"></div>
<span class="t" style="left:578.70px;top:43.00px;font-size:6.3px;line-height:6.3px;color:#111;transform:scaleX(1.0041);">Знак</span>
<svg class="abs" style="left:553.800px;top:60.200px" viewBox="0 0 8 8" width="7.400" height="7.400"><path d="M1.900 1.700c1.600-.900 3.600-.200 5.600-.700M4.600 1.400c-.300 2.200-.700 3.900-1.500 4.900c-.600.700-1.700.500-1.900-.300M2.700 4.100h3" fill="none" stroke="#4585cc" stroke-width=".9" stroke-linecap="round"/></svg>
<span class="t" style="left:563.40px;top:60.00px;font-size:8.5px;line-height:8.5px;font-family:'Liberation Serif',serif;color:#4585cc;transform:scaleX(1.1675);-webkit-text-stroke:.250px #4585cc;">Kurinto Sans</span>
<div class="field" style="left:512.100px;top:76px;width:146.200px;height:71.300px;border-color:#8a8a8a;border-radius:0"></div>
<svg class="abs" style="left:560px;top:85px" width="50" height="50" viewBox="560 85 50 50"><g fill="none" stroke="#cdc097"><path d="M571.600 103.300A8.400 8.400 0 0 1 588.400 102.600C588.400 109 584.500 114 578 117.450" stroke-width="3"/><path d="M570.100 117.450H597.500" stroke-width="2.900"/><path d="M597.550 93.200V128.300" stroke-width="3.100"/></g></svg>
<div class="gbtn" style="left:659px;top:76px;width:12.500px;height:12px"><svg viewBox="0 0 12 12" width="10.500" height="10" style="display:block"><rect x="2.300" y="3.200" width="8.200" height="5.800" rx=".700" fill="#fbfbfd" stroke="#8f8c98" stroke-width=".8"/><path d="M6.400 3.200v5.800" stroke="#8f8c98" stroke-width=".8"/></svg></div>
<div class="gbtn" style="left:659px;top:89px;width:12.500px;height:12px"><svg viewBox="0 0 12 12" width="10.500" height="10" style="display:block"><path d="M4 3.700h4.600M7.400 3.700v5.600M6.200 8.200l1.200 1.100M5 3.700c-1.200 1.400 0 3.200 2.400 2.600" fill="none" stroke="#8a8a8a" stroke-width=".85"/></svg></div>
<div class="sbox" style="left:512px"><svg viewBox="0 0 8 9" width="7.6" height="8.6"><path d="M.700 2.400c1.100-1.800 3.700-1.200 3.100 1c-.400 1.400-1.700 2.200-3.100 3.200h6.600M5.700 .500v8M4.800 .500h1.800M4.800 8.500h1.800" fill="none" stroke="#c9c9c9" stroke-width=".85"/></svg></div>
<div class="sbox" style="left:531px"><svg viewBox="0 0 8 9" width="7.6" height="8.6"><path d="M.700 2.400c1.100-1.800 3.700-1.200 3.100 1c-.400 1.400-1.700 2.200-3.100 3.200h6.600M5.700 .500v8M4.800 .500h1.800M4.800 8.500h1.800" fill="none" stroke="#c9c9c9" stroke-width=".85"/></svg></div>
<div class="sbox" style="left:549px"><svg viewBox="0 0 8 9" width="7.6" height="8.6"><path d="M.700 2.400c1.100-1.800 3.700-1.200 3.100 1c-.400 1.400-1.700 2.200-3.100 3.200h6.600M5.700 .500v8M4.800 .500h1.800M4.800 8.500h1.800" fill="none" stroke="#c9c9c9" stroke-width=".85"/></svg></div>
<div class="sbox" style="left:568px"><svg viewBox="0 0 8 9" width="7.6" height="8.6"><path d="M.700 2.400c1.100-1.800 3.700-1.200 3.100 1c-.400 1.400-1.700 2.200-3.100 3.200h6.600M5.700 .500v8M4.800 .500h1.800M4.800 8.500h1.800" fill="none" stroke="#c9c9c9" stroke-width=".85"/></svg></div>
<div class="sbox" style="left:586px"><svg viewBox="0 0 8 9" width="7.6" height="8.6"><path d="M.700 2.400c1.100-1.800 3.700-1.200 3.100 1c-.400 1.400-1.700 2.200-3.100 3.200h6.600M5.700 .500v8M4.800 .500h1.800M4.800 8.500h1.800" fill="none" stroke="#c9c9c9" stroke-width=".85"/></svg></div>
<div class="sbox" style="left:605px"><svg viewBox="0 0 8 9" width="7.6" height="8.6"><path d="M.700 2.400c1.100-1.800 3.700-1.200 3.100 1c-.400 1.400-1.700 2.200-3.100 3.200h6.600M5.700 .500v8M4.800 .500h1.800M4.800 8.500h1.800" fill="none" stroke="#c9c9c9" stroke-width=".85"/></svg></div>
<div class="sbox" style="left:624px"><svg viewBox="0 0 8 9" width="7.6" height="8.6"><path d="M.700 2.400c1.100-1.800 3.700-1.200 3.100 1c-.400 1.400-1.700 2.200-3.100 3.200h6.600M5.700 .500v8M4.800 .500h1.800M4.800 8.500h1.800" fill="none" stroke="#c9c9c9" stroke-width=".85"/></svg></div>
<div class="sbox" style="left:642px"><svg viewBox="0 0 8 9" width="7.6" height="8.6"><path d="M.700 2.400c1.100-1.800 3.700-1.200 3.100 1c-.400 1.400-1.700 2.200-3.100 3.200h6.600M5.700 .500v8M4.800 .500h1.800M4.800 8.500h1.800" fill="none" stroke="#c9c9c9" stroke-width=".85"/></svg></div>
<span class="t" style="left:518.40px;top:182.00px;font-size:11.8px;line-height:11.8px;font-family:'Liberation Serif',serif;color:#303030;transform:scaleX(1.0714);">Символ планета Юпитер</span>
<span class="t" style="left:512.30px;top:226.00px;font-size:6.4px;line-height:6.4px;color:#1a1a1a;transform:scaleX(0.9277);">Рецепт</span>
<div class="field" style="left:512px;top:234.200px;width:146.300px;height:15.400px"></div>
<span class="t" style="left:547.70px;top:238.00px;font-size:8.8px;line-height:8.8px;color:#111;transform:scaleX(1.0265);">ast Jupiter, ast Jpr</span>
<span class="t" style="left:512.30px;top:268.00px;font-size:6.4px;line-height:6.4px;color:#1a1a1a;transform:scaleX(0.9495);">Кодовая точка</span>
<span class="t" style="left:587.10px;top:268.00px;font-size:6.4px;line-height:6.4px;color:#1a1a1a;transform:scaleX(0.9551);">Внутренний ID</span>
<div class="field" style="left:512px;top:276.400px;width:71.600px;height:15.900px"></div>
<div class="field" style="left:586.700px;top:276.400px;width:71.700px;height:15.900px"></div>
<span class="t" style="left:537.40px;top:280.00px;font-size:9px;line-height:9px;color:#3a3a3a;transform:scaleX(1.0489);">2643</span>
<span class="t" style="left:612.50px;top:280.00px;font-size:9px;line-height:9px;color:#3a3a3a;transform:scaleX(1.0439);">2516</span>
<span class="t" style="left:512.50px;top:298.00px;font-size:6.4px;line-height:6.4px;color:#1a1a1a;transform:scaleX(0.9439);">HTML-сущность</span>
<div class="field" style="left:512px;top:306.300px;width:146.300px;height:15.400px"></div>
<span class="t" style="left:568.10px;top:310.00px;font-size:9px;line-height:9px;color:#3a3a3a;transform:scaleX(1.0080);">&amp;#9795;</span>
<span class="t" style="left:512.30px;top:328.00px;font-size:6.4px;line-height:6.4px;color:#1a1a1a;transform:scaleX(0.9398);">Альт-код</span>
<div class="field" style="left:512px;top:336px;width:146.300px;height:15.500px"></div>
<span class="t" style="left:577.60px;top:340.00px;font-size:9px;line-height:9px;color:#bcbcbc;transform:scaleX(0.9865);">N/A</span>
<span class="t" style="left:512.20px;top:357.00px;font-size:8.2px;line-height:8.2px;color:#111;transform:scaleX(0.8552);z-index:4;">L</span>
<span class="t" style="left:515.10px;top:356.00px;font-size:5.0px;line-height:5.0px;color:#111;transform:scaleX(0.9895);z-index:4;">A</span>
<span class="t" style="left:518.20px;top:357.00px;font-size:8.2px;line-height:8.2px;color:#111;transform:scaleX(0.8385);z-index:4;">T</span>
<span class="t" style="left:521.60px;top:360.00px;font-size:6.4px;line-height:6.4px;color:#111;transform:scaleX(0.9370);z-index:4;">E</span>
<span class="t" style="left:525.10px;top:357.00px;font-size:8.2px;line-height:8.2px;color:#111;transform:scaleX(0.8959);z-index:4;">X</span>
<div class="field" style="left:512px;top:365.400px;width:146.300px;height:15.400px"></div>
<span class="t" style="left:577.60px;top:369.00px;font-size:9px;line-height:9px;color:#bcbcbc;transform:scaleX(0.9865);">N/A</span>
<span class="t" style="left:512.50px;top:387.00px;font-size:6.4px;line-height:6.4px;color:#4585cc;transform:scaleX(0.9493);">Теги</span>
<div class="field" style="left:512px;top:395px;width:146px;height:68px;border-radius:0;border-color:#a6acb8;border-bottom:2px solid #d0d3d9;border-left-color:#9a9fa9"></div>
<span class="t" style="left:516.40px;top:398.00px;font-size:6.4px;line-height:6.4px;color:#222;transform:scaleX(0.9141);">astrological symbol planet Jupiter</span>
<span class="t" style="left:516.40px;top:408.00px;font-size:6.4px;line-height:6.4px;color:#222;transform:scaleX(0.9154);">alchemical symbol element Tin</span>
<span class="t" style="left:516.40px;top:417.00px;font-size:6.4px;line-height:6.4px;color:#222;transform:scaleX(0.9211);">alchemical archaic symbol Electrum</span>
<span class="t" style="left:516.40px;top:427.00px;font-size:6.4px;line-height:6.4px;color:#222;transform:scaleX(0.9580);">астрологический символ планета Юпитер</span>
<span class="t" style="left:516.40px;top:436.00px;font-size:6.4px;line-height:6.4px;color:#222;transform:scaleX(0.9550);">алхимический символ элемент Олово</span>
<span class="t" style="left:516.40px;top:445.00px;font-size:6.4px;line-height:6.4px;color:#222;transform:scaleX(0.9543);">алхимический архаичный символ Электрум</span>
<div class="gbtn" style="left:659px;top:395px;width:12.500px;height:13px;background:#e2e2e2;border-color:#d2d2d2;border-radius:1px"><svg viewBox="0 0 12 12" width="10.500" height="11" style="display:block"><path d="M2.600 7.200l3.300-3.800c.600-.700 1.500-.900 2.400-.700c1 .200 1.500 1 1.500 1.900c0 .700-.200 1.300-.700 1.800l-3.300 3.600z" fill="#fff" stroke="#3a3a4a" stroke-width=".9" stroke-linejoin="round"/><circle cx="7.600" cy="4.800" r=".700" fill="#3a3a4a"/></svg></div>
<span class="t" style="left:569.10px;top:471.00px;font-size:6.3px;line-height:6.3px;color:#4585cc;transform:scaleX(0.9281);">2600…26FF</span>
<span class="t" style="left:554.40px;top:479.00px;font-size:6.3px;line-height:6.3px;color:#4585cc;transform:scaleX(0.9327);">Miscellaneous Symbols</span>
<span class="t" style="left:533.30px;top:497.00px;font-size:6.3px;line-height:6.3px;color:#222;">[</span>
<span class="t" style="left:540.80px;top:497.00px;font-size:6.3px;line-height:6.3px;color:#222;transform:scaleX(0.9301);">astrological_n_sym_planet_jupiter</span>
<span class="t" style="left:636.20px;top:497.00px;font-size:6.3px;line-height:6.3px;color:#222;">]</span>
</body></html>
